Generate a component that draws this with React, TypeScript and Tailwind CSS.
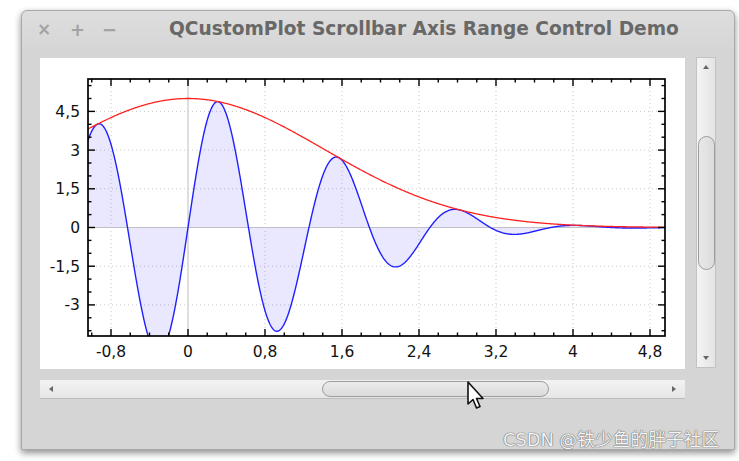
import React from "react";

const X0 = 148;
const XS = 96.25;
const Y0 = 169.5;
const YS = 25.8;
const L = 48, R = 625, T = 21, B = 278;
const px = (v: number) => X0 + v * XS;
const py = (v: number) => Y0 - v * YS;

function range(a: number, b: number, s: number) {
  const out: number[] = [];
  for (let v = a; v <= b + 1e-9; v += s) out.push(Math.round(v * 1000) / 1000);
  return out;
}

function Plot() {
  const n = 1200;
  const blue: string[] = [];
  const red: string[] = [];
  for (let i = 0; i <= n; i++) {
    const x = -1.2 + (i / n) * 6.4;
    const e = Math.exp(-x * x * 0.25);
    blue.push(`${px(x).toFixed(2)},${py(e * Math.sin(x * 5) * 5).toFixed(2)}`);
    red.push(`${px(x).toFixed(2)},${py(e * 5).toFixed(2)}`);
  }
  const fill = `M${px(-1.2)},${py(0)} L${blue.join(" L")} L${px(5.2)},${py(0)} Z`;
  const xMaj = range(-0.8, 4.8, 0.8);
  const xMin = range(-1.0, 4.8, 0.2).filter((v) => !xMaj.some((m) => Math.abs(m - v) < 1e-6));
  const yMaj = range(-3, 4.5, 1.5);
  const yMin = range(-4, 5.5, 0.5).filter((v) => !yMaj.some((m) => Math.abs(m - v) < 1e-6));
  const fmt = (v: number) => (Math.abs(v) < 1e-9 ? "0" : String(v).replace(".", ","));
  return (
    <svg width="645" height="311" className="block">
      <defs>
        <clipPath id="ar">
          <rect x={L} y={T} width={R - L} height={B - T} />
        </clipPath>
      </defs>
      <g stroke="#c8c8c8" strokeWidth="1" strokeDasharray="1 3">
        {xMaj.filter((v) => v !== 0).map((v) => (
          <line key={"gx" + v} x1={px(v)} x2={px(v)} y1={T} y2={B} />
        ))}
        {yMaj.filter((v) => v !== 0).map((v) => (
          <line key={"gy" + v} x1={L} x2={R} y1={py(v)} y2={py(v)} />
        ))}
      </g>
      <g stroke="#c8c8c8" strokeWidth="1.2">
        <line x1={px(0)} x2={px(0)} y1={T} y2={B} />
        <line x1={L} x2={R} y1={py(0)} y2={py(0)} />
      </g>
      <g clipPath="url(#ar)">
        <path d={fill} fill="rgba(20,0,255,0.09)" stroke="none" />
        <polyline points={blue.join(" ")} fill="none" stroke="#2020ff" strokeWidth="1.4" />
        <polyline points={red.join(" ")} fill="none" stroke="#ff2020" strokeWidth="1.3" />
      </g>
      <g stroke="#000" strokeWidth="1.4">
        {xMaj.map((v) => (
          <g key={"tx" + v}>
            <line x1={px(v)} x2={px(v)} y1={B} y2={B - 7} />
            <line x1={px(v)} x2={px(v)} y1={T} y2={T + 7} />
          </g>
        ))}
        {xMin.map((v) => (
          <g key={"mx" + v}>
            <line x1={px(v)} x2={px(v)} y1={B} y2={B - 3.5} />
            <line x1={px(v)} x2={px(v)} y1={T} y2={T + 3.5} />
          </g>
        ))}
        {yMaj.map((v) => (
          <g key={"ty" + v}>
            <line x1={L} x2={L + 7} y1={py(v)} y2={py(v)} />
            <line x1={R} x2={R - 7} y1={py(v)} y2={py(v)} />
          </g>
        ))}
        {yMin.map((v) => (
          <g key={"my" + v}>
            <line x1={L} x2={L + 3.5} y1={py(v)} y2={py(v)} />
            <line x1={R} x2={R - 3.5} y1={py(v)} y2={py(v)} />
          </g>
        ))}
      </g>
      <rect x={L} y={T} width={R - L} height={B - T} fill="none" stroke="#000" strokeWidth="1.7" />
      <g fontFamily="'DejaVu Sans', sans-serif" fontSize="15.5" fill="#111">
        {xMaj.map((v) => (
          <text key={"lx" + v} x={px(v)} y={299} textAnchor="middle">
            {fmt(v)}
          </text>
        ))}
        {yMaj.map((v) => (
          <text key={"ly" + v} x={40} y={py(v) + 5.5} textAnchor="end">
            {fmt(v)}
          </text>
        ))}
      </g>
    </svg>
  );
}

function VScroll() {
  return (
    <div className="w-[20px] h-[311px] border border-[#c2c2c2] bg-gradient-to-r from-[#f4f4f4] to-[#e4e4e4] flex flex-col items-center">
      <div className="h-[18px] flex items-center justify-center">
        <div className="w-0 h-0 border-l-[3px] border-r-[3px] border-b-[4px] border-l-transparent border-r-transparent border-b-[#666]" />
      </div>
      <div className="h-[60px]" />
      <div className="w-[17px] h-[134px] rounded-full border border-[#9c9c9c] bg-gradient-to-r from-[#e8e8e8] to-[#dcdcdc]" />
      <div className="flex-1" />
      <div className="h-[18px] flex items-center justify-center">
        <div className="w-0 h-0 border-l-[3px] border-r-[3px] border-t-[4px] border-l-transparent border-r-transparent border-t-[#666]" />
      </div>
    </div>
  );
}

function HScroll() {
  return (
    <div className="w-[645px] h-[19px] border-b border-[#bdbdbd] bg-gradient-to-b from-[#f2f2f2] to-[#e6e6e6] flex items-center">
      <div className="w-[22px] flex items-center justify-center">
        <div className="w-0 h-0 border-t-[3px] border-b-[3px] border-r-[4px] border-t-transparent border-b-transparent border-r-[#666]" />
      </div>
      <div className="w-[260px]" />
      <div className="w-[227px] h-[16px] rounded-full border border-[#9c9c9c] bg-gradient-to-b from-[#ececec] to-[#dadada]" />
      <div className="flex-1" />
      <div className="w-[22px] flex items-center justify-center">
        <div className="w-0 h-0 border-t-[3px] border-b-[3px] border-l-[4px] border-t-transparent border-b-transparent border-l-[#666]" />
      </div>
    </div>
  );
}

export default function App() {
  return (
    <div className="relative w-[739px] h-[461px] bg-white overflow-hidden" style={{ fontFamily: "'DejaVu Sans', sans-serif" }}>
      <div className="ml-[21px] mt-[10px] w-[714px] h-[440px] bg-[#d5d5d5] rounded-t-[6px] border border-[#a9a9a9] shadow-[0_3px_7px_rgba(0,0,0,0.45)] flex flex-col">
        <div className="h-[37px] flex items-center bg-gradient-to-b from-[#dedede] to-[#d6d6d6] rounded-t-[6px]">
          <span className="ml-[15px] w-[14px] text-center text-[17px] font-bold text-[#a3a3a3] leading-none">×</span>
          <span className="ml-[19px] w-[14px] text-center text-[18px] font-bold text-[#a3a3a3] leading-none">+</span>
          <span className="ml-[18px] w-[14px] text-center text-[18px] font-bold text-[#a3a3a3] leading-none">−</span>
          <span className="ml-[53px] text-[18.6px] font-bold text-[#686868] whitespace-nowrap leading-none">QCustomPlot Scrollbar Axis Range Control Demo</span>
        </div>
        <div className="pl-[18px] pt-[10px] flex flex-col">
          <div className="flex items-start">
            <div className="bg-white">
              <Plot />
            </div>
            <div className="ml-[11px] -mt-[1px]">
              <VScroll />
            </div>
          </div>
          <div className="mt-[11px]">
            <HScroll />
          </div>
        </div>
      </div>
      <div className="absolute left-[503px] top-[427px] text-[17.8px] text-[#f4f4f4] whitespace-nowrap [text-shadow:0_0_1px_#555,0_0_1px_#555]" style={{ fontFamily: "'DejaVu Sans', 'Noto Sans CJK SC', sans-serif" }}>
        CSDN @铁少鱼的胖子社区
      </div>
      <svg className="absolute left-[466px] top-[381px]" width="20" height="30" viewBox="0 0 20 30">
        <path d="M2 1 L2 23 L7 18.5 L10.5 27 L14 25.5 L10.5 17.5 L17 17.5 Z" fill="#fff" stroke="#111" strokeWidth="1.6" strokeLinejoin="round" />
      </svg>
    </div>
  );
}
